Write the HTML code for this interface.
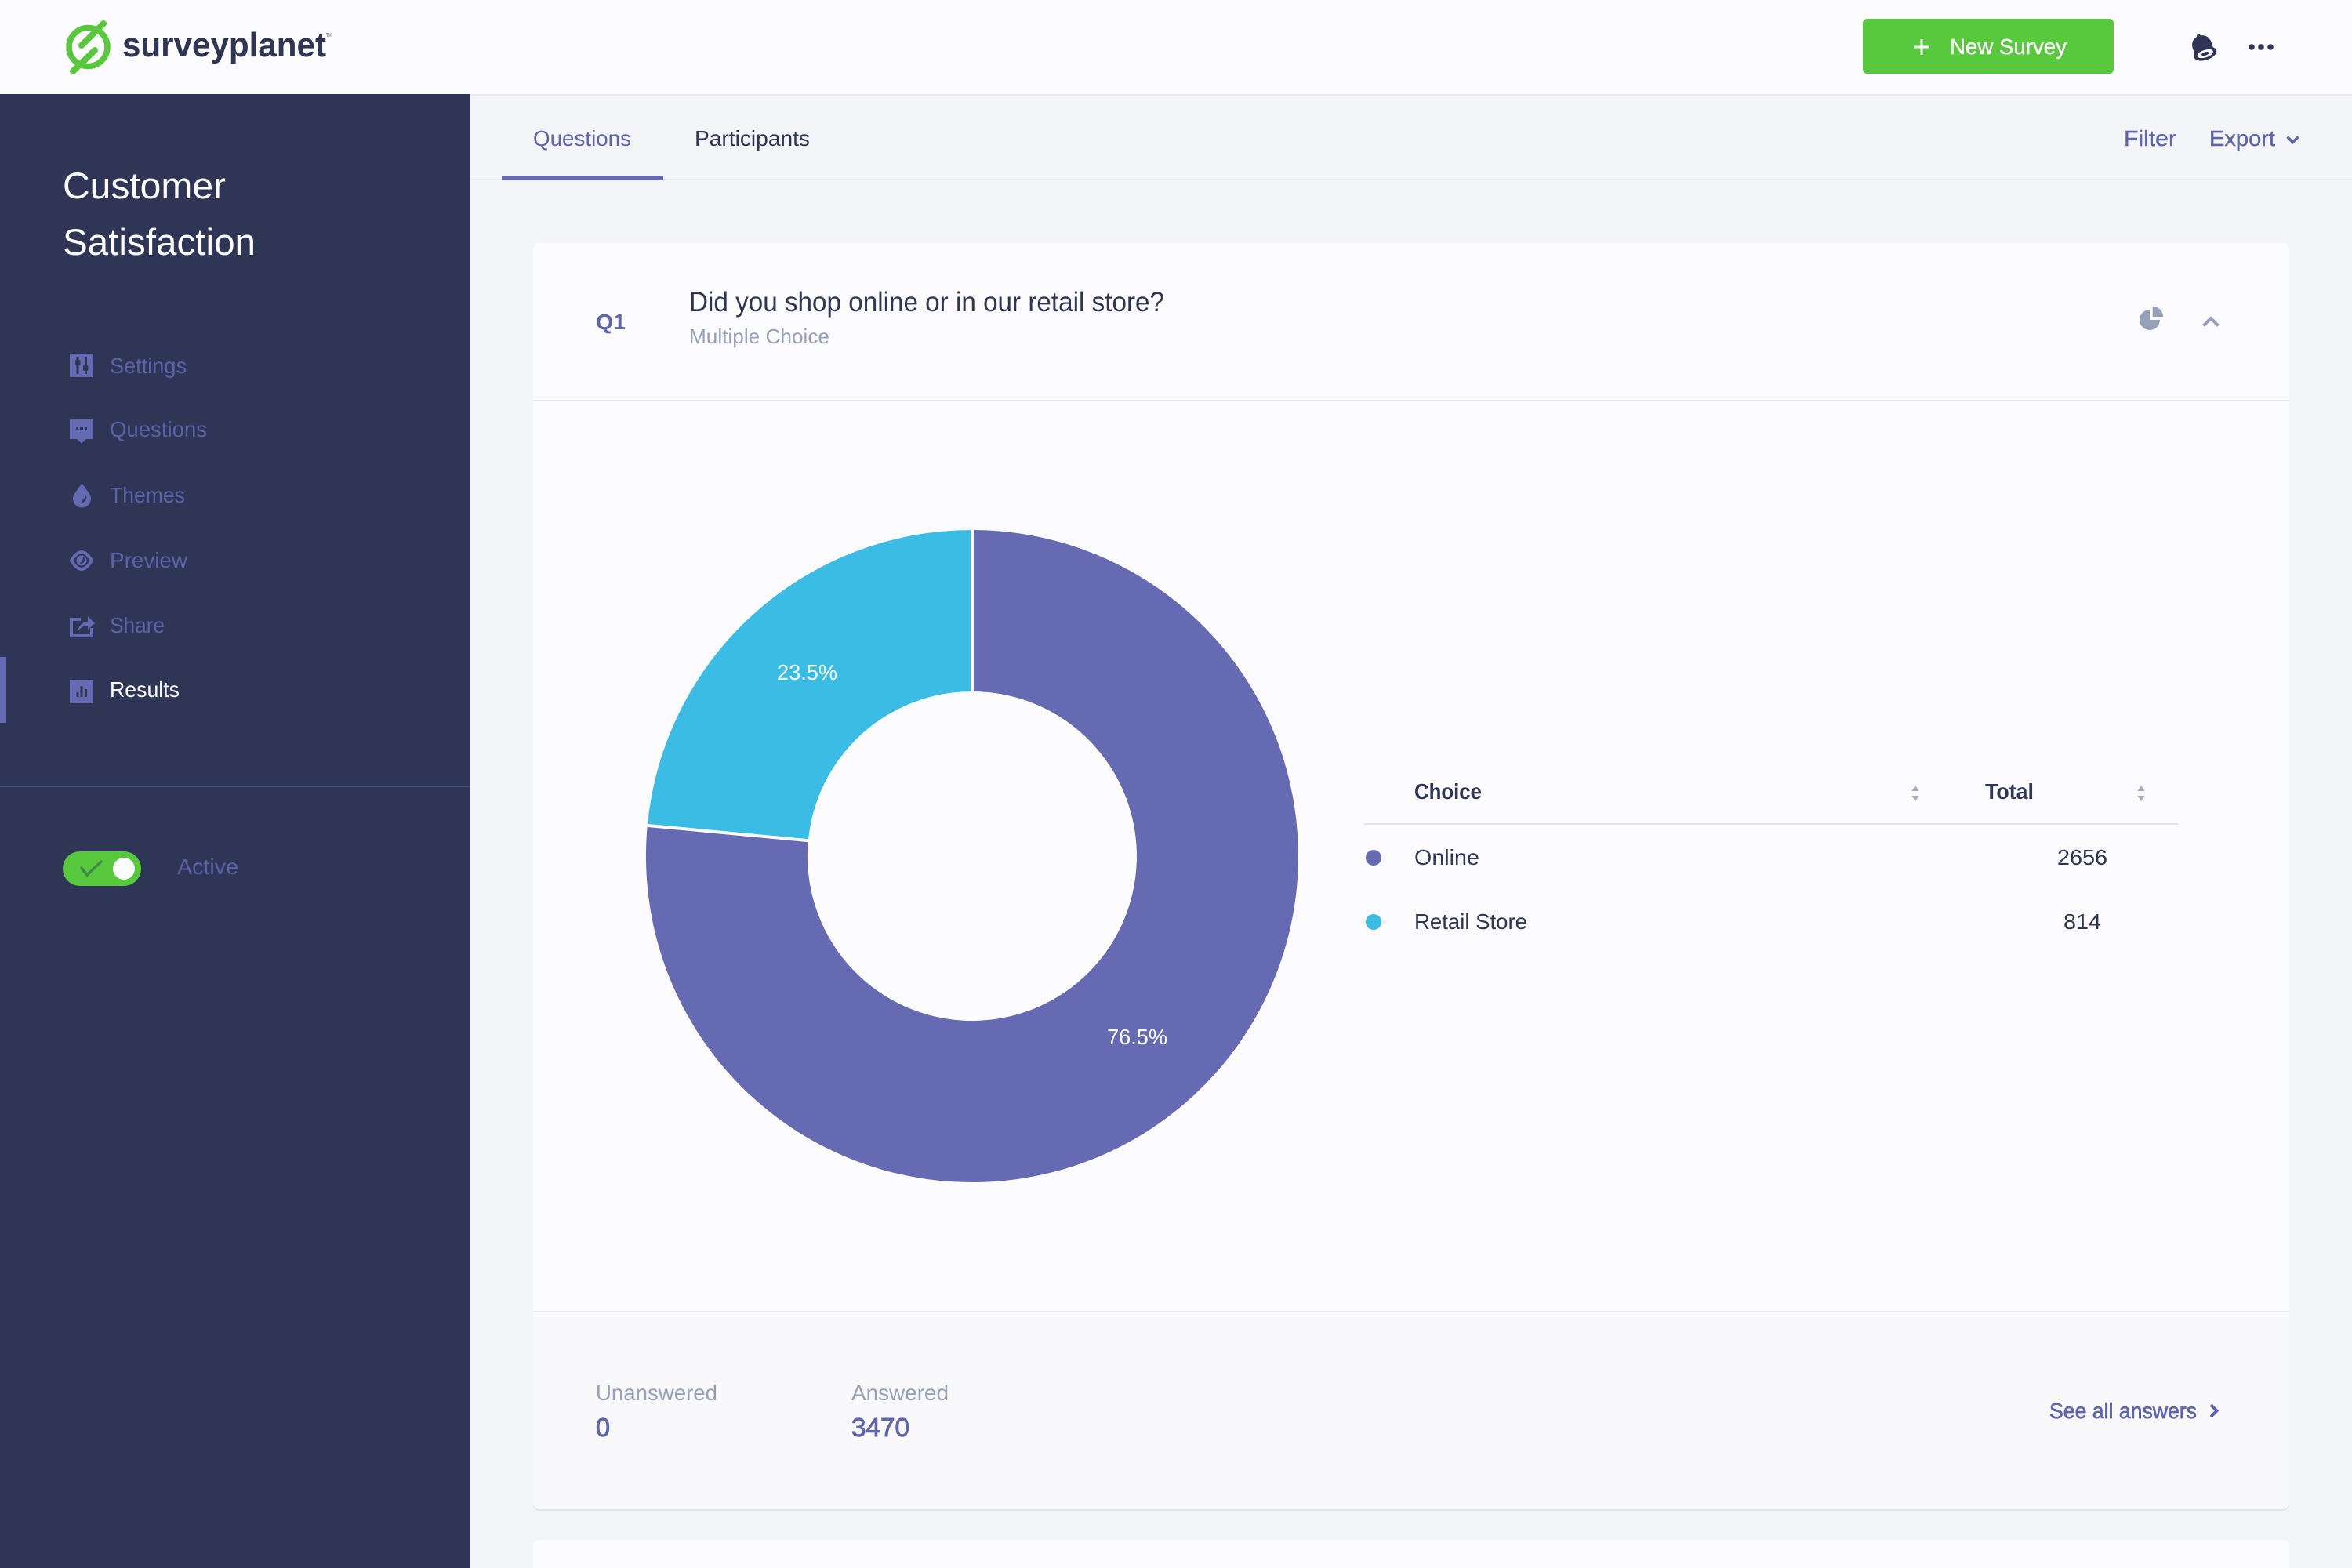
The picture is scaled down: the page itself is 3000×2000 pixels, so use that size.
<!DOCTYPE html>
<html lang="en">
<head>
<meta charset="utf-8">
<title>SurveyPlanet – Results</title>
<style>
html,body{margin:0;padding:0;width:3000px;height:2000px;overflow:hidden;background:#f4f5f9}
svg{display:block}
text{font-family:"Liberation Sans",sans-serif;white-space:pre}
.nav{font-size:28px;fill:#5c62a8}
.b{font-weight:700}
.med{stroke-width:.4px}
</style>
</head>
<body>
<svg xmlns="http://www.w3.org/2000/svg" width="3000" height="2000" viewBox="0 0 3000 2000">
<!-- backgrounds -->
<rect width="3000" height="2000" fill="#f4f5f9"/>
<rect width="3000" height="120" fill="#fcfcfe"/>
<rect x="600" y="120" width="2400" height="2" fill="#e9eaf0"/>
<rect x="600" y="228" width="2400" height="2" fill="#e3e4ec"/>
<rect y="120" width="600" height="1880" fill="#2e3555"/>

<!-- logo -->
<circle cx="112.5" cy="60" r="24.5" fill="none" stroke="#58c93c" stroke-width="7.5"/>
<path d="M132 30L104 58M121 64L93 91" fill="none" stroke="#58c93c" stroke-width="8" stroke-linecap="round"/>
<text x="156" y="72" font-size="44" class="b" fill="#2e3555" textLength="260" lengthAdjust="spacingAndGlyphs">surveyplanet</text>
<text x="416" y="47" font-size="7" fill="#6b7190" textLength="7" lengthAdjust="spacingAndGlyphs">TM</text>

<!-- top right -->
<rect x="2376" y="24" width="320" height="70" rx="5" fill="#58c93c"/>
<path d="M2451 50v20M2441 60h20" stroke="#fcfcfe" stroke-width="3" fill="none"/>
<text x="2487" y="69" font-size="28" fill="#fcfcfe" class="med" stroke="#fcfcfe" textLength="149" lengthAdjust="spacingAndGlyphs">New Survey</text>
<g transform="translate(-2 0) rotate(-18 2812 60)">
<circle cx="2811" cy="45" r="2.5" fill="#2e3555"/>
<path d="M2811 45c-8 0-12 6-12 13v6c0 2-1 3-2 5h29c-1-2-2-3-2-5v-6c0-7-4-13-13-13z" fill="#2e3555"/>
<ellipse cx="2812" cy="69" rx="15" ry="8" fill="#2e3555"/>
<ellipse cx="2812" cy="69" rx="10.5" ry="4.8" fill="#fcfcfe"/>
<ellipse cx="2812" cy="69" rx="5" ry="2.2" fill="#2e3555"/>
</g>
<circle cx="2872" cy="60" r="3.8" fill="#2e3555"/><circle cx="2884" cy="60" r="3.8" fill="#2e3555"/><circle cx="2896" cy="60" r="3.8" fill="#2e3555"/>

<!-- sidebar -->
<text x="80" y="253" font-size="47" fill="#fcfcfe" textLength="208" lengthAdjust="spacingAndGlyphs">Customer</text>
<text x="80" y="325" font-size="47" fill="#fcfcfe" textLength="246" lengthAdjust="spacingAndGlyphs">Satisfaction</text>

<rect x="89" y="451" width="30" height="30" fill="#656ab3"/>
<path d="M99 455v22M109.500 455v22" stroke="#2e3555" stroke-width="3"/>
<rect x="96" y="459" width="6.500" height="7" rx="1.500" fill="#2e3555"/>
<rect x="106" y="466" width="6.500" height="7" rx="1.500" fill="#2e3555"/>
<text x="140" y="476" class="nav" textLength="98" lengthAdjust="spacingAndGlyphs">Settings</text>

<path d="M89 535h30v25h-9l-6 5.500-6-5.500h-9z" fill="#656ab3"/>
<circle cx="98.500" cy="546.500" r="1.500" fill="#2e3555"/><rect x="102" y="545" width="4" height="3" fill="#2e3555"/><rect x="108" y="545" width="3" height="3" fill="#2e3555"/>
<text x="140" y="557" class="nav" textLength="124" lengthAdjust="spacingAndGlyphs">Questions</text>

<path d="M104.500 616C100 624 93 630 93 636a11.500 11.500 0 0 0 23 0C116 630 109 624 104.500 616z" fill="#656ab3"/>
<path d="M110 632c1 5-2 10-8 10 3-1 3-3 4-5 2-1 3-3 4-5z" fill="#2e3555"/>
<text x="140" y="641" class="nav" textLength="96" lengthAdjust="spacingAndGlyphs">Themes</text>

<g transform="translate(0 -1)">
<path d="M91 716C96 708 100 705 104 705C108 705 112 708 117 716C112 724 108 727 104 727C100 727 96 724 91 716Z" fill="none" stroke="#656ab3" stroke-width="4"/>
<circle cx="104" cy="716" r="6.500" fill="#656ab3"/>
<path d="M106 711c3 2 3 6 0 8-2 1-4 1-5 0 3 0 5-4 5-8z" fill="#2e3555"/>
</g>
<text x="140" y="724" class="nav" textLength="99" lengthAdjust="spacingAndGlyphs">Preview</text>

<path d="M103 790H91v21h26V801" fill="none" stroke="#656ab3" stroke-width="4"/>
<path d="M99 806c1-8 7-13 13-13v-7l9 9-9 8v-5c-6 0-10 3-13 8z" fill="#656ab3"/>
<text x="140" y="807" class="nav" textLength="70" lengthAdjust="spacingAndGlyphs">Share</text>

<rect x="0" y="838" width="8" height="84" fill="#656ab3"/>
<rect x="89" y="867" width="30" height="30" fill="#656ab3"/>
<path d="M97.500 883h3v6h-3zM102.500 875h3v14h-3zM108 879h3v10h-3z" fill="#2e3555"/>
<text x="140" y="889" font-size="28" fill="#fcfcfe" textLength="89" lengthAdjust="spacingAndGlyphs">Results</text>

<rect x="0" y="1002" width="600" height="2" fill="#4d5583"/>

<rect x="80" y="1086" width="100" height="44" rx="22" fill="#58c93c"/>
<circle cx="158" cy="1108" r="14" fill="#fcfcfe"/>
<path d="M103 1106l8 10 19-18" fill="none" stroke="#3d8a4a" stroke-width="3.500"/>
<text x="226" y="1115" class="nav" textLength="78" lengthAdjust="spacingAndGlyphs">Active</text>

<!-- tabs -->
<text x="680" y="186" font-size="28" fill="#5f65ad" textLength="125" lengthAdjust="spacingAndGlyphs">Questions</text>
<text x="886" y="186" font-size="28" fill="#2e3555" textLength="147" lengthAdjust="spacingAndGlyphs">Participants</text>
<rect x="640" y="224" width="206" height="6" fill="#656ab3"/>
<text x="2709" y="186" font-size="28" fill="#5f65ad" class="med" stroke="#5f65ad" textLength="67" lengthAdjust="spacingAndGlyphs">Filter</text>
<text x="2818" y="186" font-size="28" fill="#5f65ad" class="med" stroke="#5f65ad" textLength="84" lengthAdjust="spacingAndGlyphs">Export</text>
<path d="M2917.500 174.500l7 7 7-7" fill="none" stroke="#5f65ad" stroke-width="3.500"/>

<!-- card -->
<rect x="680" y="310" width="2240" height="1615" rx="8" fill="#fcfcfe"/>
<rect x="680" y="510" width="2240" height="2" fill="#e6e7ee"/>
<text x="760" y="420" font-size="28" class="b" fill="#5f65ad" textLength="38" lengthAdjust="spacingAndGlyphs">Q1</text>
<text x="879" y="397" font-size="35" fill="#2e3555" textLength="606" lengthAdjust="spacingAndGlyphs">Did you shop online or in our retail store?</text>
<text x="879" y="438" font-size="26" fill="#97a0bb" textLength="179" lengthAdjust="spacingAndGlyphs">Multiple Choice</text>

<path d="M2742 395a13 13 0 1 0 13 13h-13z" fill="#97a0bb"/>
<path d="M2745.700 390.700a13.300 13.300 0 0 1 13.300 13.300h-13.300z" fill="#97a0bb"/>
<path d="M2810.500 415.500l9.500-9.500 9.500 9.500" fill="none" stroke="#97a0bb" stroke-width="4"/>

<!-- donut -->
<g transform="translate(-1 .5)">
<path d="M1241 675.500A416 416 0 1 1 826.800 1052.400L1031.900 1071.700A210 210 0 1 0 1241 881.500Z" fill="#656ab3"/>
<path d="M826.800 1052.400A416 416 0 0 1 1241 675.500L1241 881.500A210 210 0 0 0 1031.900 1071.700Z" fill="#3bbce5"/>
<path d="M1241 674V882M825 1052.200L1032 1071.700" stroke="#fcfcfe" stroke-width="4" fill="none"/>
</g>
<text x="991" y="867" font-size="28" fill="#fcfcfe" textLength="77" lengthAdjust="spacingAndGlyphs">23.5%</text>
<text x="1412" y="1332" font-size="28" fill="#fcfcfe" textLength="77" lengthAdjust="spacingAndGlyphs">76.5%</text>

<!-- table -->
<text x="1804" y="1019" font-size="28" class="b" fill="#2e3555" textLength="86" lengthAdjust="spacingAndGlyphs">Choice</text>
<text x="2532" y="1019" font-size="28" class="b" fill="#2e3555" textLength="62" lengthAdjust="spacingAndGlyphs">Total</text>
<path d="M2443 1002l4.500 7h-9zM2443 1022l4.500-7h-9zM2731 1002l4.500 7h-9zM2731 1022l4.500-7h-9z" fill="#a3abc3"/>
<rect x="1739.500" y="1050" width="1039" height="2" fill="#e6e7ee"/>
<circle cx="1752" cy="1094" r="10" fill="#656ab3"/>
<circle cx="1752" cy="1176" r="10" fill="#3bbce5"/>
<text x="1804" y="1103" font-size="28" fill="#2e3555" textLength="83" lengthAdjust="spacingAndGlyphs">Online</text>
<text x="1804" y="1185" font-size="28" fill="#2e3555" textLength="144" lengthAdjust="spacingAndGlyphs">Retail Store</text>
<text x="2624" y="1103" font-size="28" fill="#2e3555" textLength="64" lengthAdjust="spacingAndGlyphs">2656</text>
<text x="2632" y="1185" font-size="28" fill="#2e3555" textLength="48" lengthAdjust="spacingAndGlyphs">814</text>

<!-- footer -->
<path d="M680 1672h2240v245a8 8 0 0 1-8 8H688a8 8 0 0 1-8-8z" fill="#f9f9fc"/>
<rect x="680" y="1672" width="2240" height="2" fill="#e6e7ee"/>
<path d="M680 1917a8 8 0 0 0 8 8h2224a8 8 0 0 0 8-8v2a8 8 0 0 1-8 8H688a8 8 0 0 1-8-8z" fill="#e1e3ec"/>
<text x="760" y="1786" font-size="28" fill="#97a0bb" textLength="155" lengthAdjust="spacingAndGlyphs">Unanswered</text>
<text x="1086" y="1786" font-size="28" fill="#97a0bb" textLength="124" lengthAdjust="spacingAndGlyphs">Answered</text>
<text x="760" y="1832" font-size="33" fill="#5f65ad" stroke="#5f65ad" stroke-width=".9" textLength="18" lengthAdjust="spacingAndGlyphs">0</text>
<text x="1086" y="1832" font-size="33" fill="#5f65ad" stroke="#5f65ad" stroke-width=".9" textLength="74" lengthAdjust="spacingAndGlyphs">3470</text>
<text x="2614" y="1809" font-size="28" fill="#5f65ad" stroke="#5f65ad" stroke-width=".7" textLength="188" lengthAdjust="spacingAndGlyphs">See all answers</text>
<path d="M2820 1792l7.500 7.500-7.500 7.500" fill="none" stroke="#5f65ad" stroke-width="4"/>

<!-- next card -->
<rect x="680" y="1964" width="2240" height="60" rx="8" fill="#fcfcfe"/>
</svg>
</body>
</html>
